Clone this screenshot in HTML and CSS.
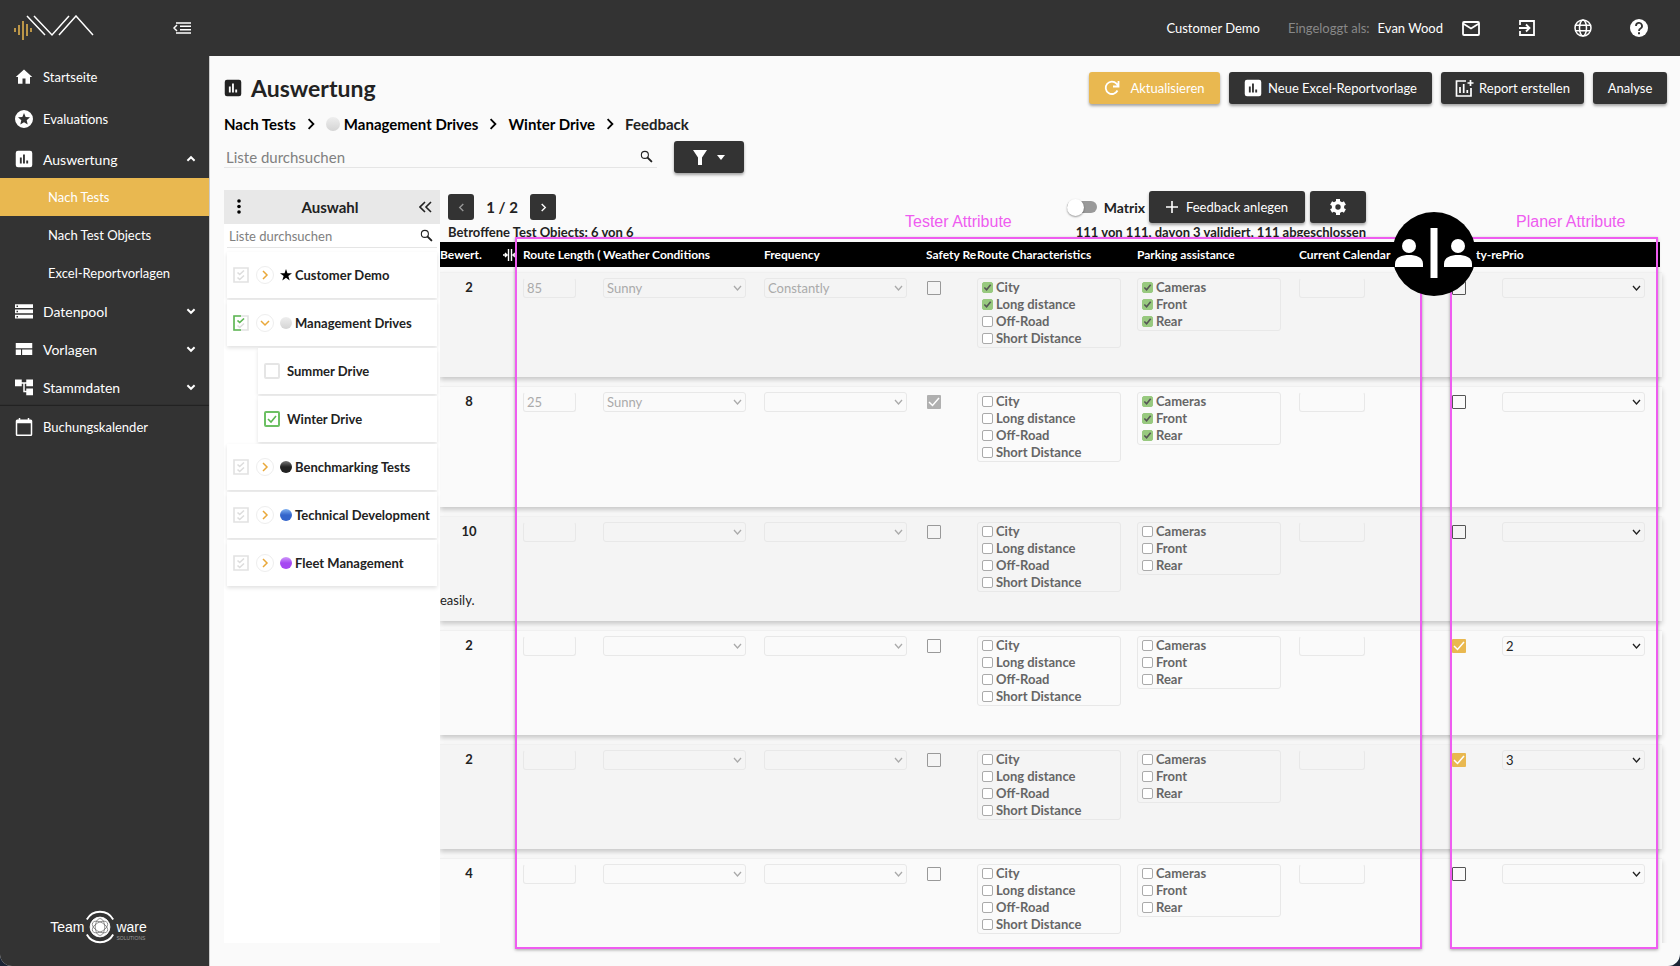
FILE: index.html
```html
<!DOCTYPE html>
<html lang="de">
<head>
<meta charset="utf-8">
<title>Auswertung</title>
<link rel="stylesheet" href="styles.css">
</head>
<body>
<svg class="sprite">
  <symbol id="i-chart" viewBox="0 0 24 24"><path fill-rule="evenodd" d="M20 1H4a3 3 0 0 0-3 3v16a3 3 0 0 0 3 3h16a3 3 0 0 0 3-3V4a3 3 0 0 0-3-3zM9 18H6.500v-8H9zm4.200 0h-2.500V6h2.500zm4.300 0H15v-4h2.500z"/></symbol>
  <symbol id="i-search" viewBox="0 0 24 24"><circle cx="9" cy="9" r="6.500" fill="none" stroke="currentColor" stroke-width="2"/><path d="M14 14l7 7" stroke="currentColor" stroke-width="3.600" stroke-linecap="round"/></symbol>
  <symbol id="i-down" viewBox="0 0 10 10"><path d="M2 3.500l3 3 3-3" fill="none" stroke="currentColor" stroke-width="1.600"/></symbol>
  <symbol id="i-right" viewBox="0 0 10 10"><path d="M3 1l4 4-4 4" fill="none" stroke="currentColor" stroke-width="1.500"/></symbol>
  <symbol id="i-multi" viewBox="0 0 16 16"><path d="M1 1h14v14H1z" fill="none" stroke="#e2e2e2" stroke-width="1.600"/><path d="M4.500 5.500l2.200 2 4.300-4M4.500 10.500l2.200 2 4.300-4" fill="none" stroke="#ddd" stroke-width="1.600"/></symbol>
</svg>
<div class="app">
  <aside class="sidebar">
    <div class="brand">
      <svg class="logo" viewBox="0 0 80 26" width="80" height="26" fill="none"><path d="M1 13v4M5 10v10M9 6v19M13 9v12M17 13v4" stroke="#e9b850" stroke-width="1.500"/><path d="M13 1l18 19M20 1l18 19L55 1M45 20L62 1l17 19" stroke="#fff" stroke-width="1.500"/></svg>
      <button class="icon-btn" aria-label="Menü einklappen"><svg width="18" height="12" viewBox="0 0 18 12" fill="none" stroke="#fff" stroke-width="1.500"><path d="M3 1h15M7 4.300h11M7 7.700h11M3 11h15M4 3L1 6l3 3"/></svg></button>
    </div>
    <nav class="nav">
      <a class="item tall" href="#"><svg viewBox="0 0 24 24"><path d="M10 21v-7h4v7h6v-9h3L12 2 1 12h3v9z"/></svg>Startseite</a>
      <a class="item tall" href="#"><svg viewBox="0 0 24 24"><path fill-rule="evenodd" d="M12 0a12 12 0 1 0 0 24 12 12 0 0 0 0-24zm0 4l2.200 5.300 5.800.5-4.400 3.800 1.300 5.600-4.900-3-4.900 3 1.300-5.600L4 9.800l5.800-.5z"/></svg>Evaluations</a>
      <a class="item" href="#"><svg viewBox="0 0 24 24"><use href="#i-chart"/></svg>Auswertung<svg class="caret up"><use href="#i-down"/></svg></a>
      <a class="item sub active" href="#">Nach Tests</a>
      <a class="item sub" href="#">Nach Test Objects</a>
      <a class="item sub" href="#">Excel-Reportvorlagen</a>
      <a class="item" href="#"><svg viewBox="0 0 24 24"><path fill-rule="evenodd" d="M0 3h24v5H0zM0 10h24v5H0zM0 17h24v5H0zM2 4.500v2h2v-2zM2 11.500v2h2v-2zM2 18.500v2h2v-2z"/></svg>Datenpool<svg class="caret"><use href="#i-down"/></svg></a>
      <a class="item" href="#"><svg viewBox="0 0 24 24"><path d="M1 4h22v7H1zM1 12.500h7V20H1zM9.500 12.500H23V20H9.500z"/></svg>Vorlagen<svg class="caret"><use href="#i-down"/></svg></a>
      <a class="item" href="#"><svg viewBox="0 0 24 24"><path d="M0 2h9v3.500h6V2h9v9h-9V7.500h-2V17h2v-3h9v9h-9v-4h-4V7.500H9V11H0z"/></svg>Stammdaten<svg class="caret"><use href="#i-down"/></svg></a>
      <a class="item tall ruled" href="#"><svg viewBox="0 0 24 24"><path fill-rule="evenodd" d="M5 0h2v2h10V0h2v2h2a2 2 0 0 1 2 2v18a2 2 0 0 1-2 2H3a2 2 0 0 1-2-2V4a2 2 0 0 1 2-2h2zM3 7v15h18V7z"/></svg>Buchungskalender</a>
    </nav>
    <div class="vendor">
      <span class="vendor-name">Team</span>
      <svg viewBox="0 0 34 36" width="32" height="34" fill="none" stroke="#fff"><path d="M3 10a16 16 0 0 1 28 0M3 26a16 16 0 0 0 28 0" stroke-width="2"/><circle cx="17" cy="18" r="10.500" fill="#fff"/><g stroke="#666" stroke-width=".7"><ellipse cx="17" cy="18" rx="9" ry="5" transform="rotate(30 17 18)"/><ellipse cx="17" cy="18" rx="9" ry="5" transform="rotate(90 17 18)"/><ellipse cx="17" cy="18" rx="9" ry="5" transform="rotate(150 17 18)"/></g></svg>
      <span class="vendor-name">ware<small>SOLUTIONS</small></span>
    </div>
  </aside>

  <div class="page">
    <header class="topbar">
      <span class="client">Customer Demo</span>
      <span class="login">Eingeloggt als:</span>
      <span class="user">Evan Wood</span>
      <div class="top-icons">
        <button class="icon-btn" aria-label="Nachrichten"><svg width="18" height="15" viewBox="0 0 18 15" fill="none" stroke="#fff" stroke-width="1.800"><rect x="1" y="1" width="16" height="13" rx="1"/><path d="M1 2.500l8 5 8-5"/></svg></button>
        <button class="icon-btn" aria-label="Abmelden"><svg width="18" height="18" viewBox="0 0 18 18" fill="none" stroke="#fff" stroke-width="1.800"><path d="M2 6V2h14v14H2v-4M1 9h10M8 5.500L11.500 9 8 12.500"/></svg></button>
        <button class="icon-btn" aria-label="Sprache"><svg width="18" height="18" viewBox="0 0 18 18" fill="none" stroke="#fff" stroke-width="1.500"><circle cx="9" cy="9" r="8"/><ellipse cx="9" cy="9" rx="3.500" ry="8"/><path d="M1.500 6.300h15M1.500 11.700h15"/></svg></button>
        <button class="icon-btn" aria-label="Hilfe"><svg width="18" height="18" viewBox="0 0 18 18"><circle cx="9" cy="9" r="9" fill="#fff"/><path d="M6 7a3 3 0 1 1 4.500 2.500Q9 10.300 9 12" fill="none" stroke="#333" stroke-width="1.800"/><path d="M8 13.200h2v2H8z" fill="#333"/></svg></button>
      </div>
    </header>

    <main class="content">
      <div class="title-row">
        <h1><svg width="18" height="18" fill="#222"><use href="#i-chart"/></svg>Auswertung</h1>
        <div class="actions">
          <button class="btn accent"><svg width="16" height="16" viewBox="0 0 16 16" fill="none" stroke="#fff" stroke-width="1.800"><path d="M13.500 10.500A6.200 6.200 0 1 1 12.500 3.600L14 5.500M14.500 1v5.500H9"/></svg>Aktualisieren</button>
          <button class="btn excel"><svg width="18" height="18" fill="#fff"><use href="#i-chart"/></svg>Neue Excel-Reportvorlage</button>
          <button class="btn report"><svg width="19" height="18" viewBox="0 0 19 18" fill="none" stroke="#fff" stroke-width="1.700"><path d="M11 2H1.500v15H16V9M5 8v6M8.700 5v9M12.300 11v3M15.500 1v6M12.500 4h6"/></svg>Report erstellen</button>
          <button class="btn plain">Analyse</button>
        </div>
      </div>
      <nav class="crumbs">
        <a href="#">Nach Tests</a><svg><use href="#i-right"/></svg>
        <a href="#"><i class="ball white"></i>Management Drives</a><svg><use href="#i-right"/></svg>
        <a href="#">Winter Drive</a><svg><use href="#i-right"/></svg>
        <span>Feedback</span>
      </nav>
      <div class="filter-row">
        <label class="search"><input type="text" placeholder="Liste durchsuchen" aria-label="Liste durchsuchen"><svg width="13" height="13"><use href="#i-search"/></svg></label>
        <button class="btn filter" aria-label="Filter"><svg width="14" height="15" viewBox="0 0 14 15" fill="#fff"><path d="M0 0h14L9 7.500V15H5V7.500z"/></svg><svg width="8" height="5" viewBox="0 0 8 5" fill="#fff"><path d="M0 0h8L4 5z"/></svg></button>
      </div>

      <div class="workspace">
        <section class="tree">
          <div class="tree-head">
            <button class="icon-btn" aria-label="Optionen"><svg width="4" height="16" viewBox="0 0 4 16"><circle cx="2" cy="2" r="1.800"/><circle cx="2" cy="7.500" r="1.800"/><circle cx="2" cy="13" r="1.800"/></svg></button>
            <h2>Auswahl</h2>
            <button class="icon-btn" aria-label="Einklappen"><svg width="13" height="12" viewBox="0 0 13 12" fill="none" stroke="#222" stroke-width="1.600"><path d="M6 1L1 6l5 5M12 1L7 6l5 5"/></svg></button>
          </div>
          <label class="search small"><input type="text" placeholder="Liste durchsuchen" aria-label="Auswahl durchsuchen"><svg width="13" height="13"><use href="#i-search"/></svg></label>
          <ul class="cards">
            <li class="card"><svg class="multi"><use href="#i-multi"/></svg><button class="expand" aria-label="Öffnen"><svg><use href="#i-right"/></svg></button><i class="star"><svg width="12" height="12" viewBox="0 0 24 24"><path d="M12 0l2.900 8.600H24l-7.300 5.500L19.400 23 12 17.600 4.600 23l2.700-8.900L0 8.600h9.100z"/></svg></i>Customer Demo</li>
            <li class="card"><svg class="multi" viewBox="0 0 16 16" fill="none" stroke-width="1.600"><use href="#i-multi"/><path d="M8 1H1v14h7M4.500 5.500l2.200 2 4.300-4" stroke="#5cb852"/></svg><button class="expand open" aria-label="Schließen"><svg><use href="#i-right"/></svg></button><i class="ball white"></i>Management Drives</li>
            <li class="card child"><label><input class="tick" type="checkbox">Summer Drive</label></li>
            <li class="card child"><label><input class="tick" type="checkbox" checked>Winter Drive</label></li>
            <li class="card"><svg class="multi"><use href="#i-multi"/></svg><button class="expand" aria-label="Öffnen"><svg><use href="#i-right"/></svg></button><i class="ball black"></i>Benchmarking Tests</li>
            <li class="card"><svg class="multi"><use href="#i-multi"/></svg><button class="expand" aria-label="Öffnen"><svg><use href="#i-right"/></svg></button><i class="ball blue"></i>Technical Development</li>
            <li class="card"><svg class="multi"><use href="#i-multi"/></svg><button class="expand" aria-label="Öffnen"><svg><use href="#i-right"/></svg></button><i class="ball purple"></i>Fleet Management</li>
          </ul>
        </section>

        <section class="results">
          <div class="toolbar">
            <button class="btn page-btn prev" aria-label="Zurück"><svg><use href="#i-right"/></svg></button>
            <span class="page-no">1 / 2</span>
            <button class="btn page-btn" aria-label="Weiter"><svg><use href="#i-right"/></svg></button>
            <label class="matrix"><input class="switch" type="checkbox">Matrix</label>
            <button class="btn add"><svg width="12" height="12" viewBox="0 0 12 12" stroke="#fff" stroke-width="1.600"><path d="M6 0v12M0 6h12"/></svg>Feedback anlegen</button>
            <button class="btn gear" aria-label="Einstellungen"><svg width="18" height="18" viewBox="0 0 18 18"><g stroke="#fff" stroke-width="4"><path d="M9 1v16M2.100 5l13.800 8M15.900 5L2.100 13"/></g><circle cx="9" cy="9" r="6.200" fill="#fff"/><circle cx="9" cy="9" r="2.700" fill="#333"/></svg></button>
          </div>
          <div class="counts"><span>Betroffene Test Objects: 6 von 6</span><span>111 von 111, davon 3 validiert, 111 abgeschlossen</span></div>
          <div class="table-area">
            <div class="table-clip">
              <table class="grid">
                <thead><tr><th>Bewert.</th><th class="resize"><svg width="14" height="12" viewBox="0 0 14 12" stroke="#fff" stroke-width="1.400" fill="none"><path d="M5.500 0v12M8.500 0v12M0 6h4M2 4l2 2-2 2M14 6h-4M12 4l-2 2 2 2"/></svg></th><th>Route Length (</th><th>Weather Conditions</th><th>Frequency</th><th>Safety Re</th><th>Route Characteristics</th><th>Parking assistance</th><th>Current Calendar</th><th class="end">ty-re</th><th>Prio</th></tr></thead>
                <tbody id="rows"></tbody>
              </table>
            </div>
            <div class="frame tester"><span>Tester Attribute</span></div>
            <div class="frame planer"><span>Planer Attribute</span></div>
            <svg class="split" width="84" height="84" viewBox="0 0 84 84" fill="#fff"><circle cx="42" cy="42" r="42" fill="#000"/><path d="M38.500 16h7v50h-7z"/><circle cx="17" cy="34" r="7"/><path d="M3 55v-3c0-7 7-9 14-9s14 2 14 9v3z"/><circle cx="66" cy="34" r="7"/><path d="M52 55v-3c0-7 7-9 14-9s14 2 14 9v3z"/></svg>
          </div>
        </section>
      </div>
    </main>
  </div>
</div>
<script src="rows.js"></script>
</body>
</html>
```
FILE: rows.js
```js
const feedback = [
  { score: 2, length: '85', weather: 'Sunny', frequency: 'Constantly', route: ['City', 'Long distance'], parking: ['Cameras', 'Front', 'Rear'] },
  { score: 8, length: '25', weather: 'Sunny', safety: true, parking: ['Cameras', 'Front', 'Rear'], tall: true },
  { score: 10, note: 'easily.' },
  { score: 2, planer: true, prio: '2' },
  { score: 2, planer: true, prio: '3' },
  { score: 4 }
];
const routeOptions = ['City', 'Long distance', 'Off-Road', 'Short Distance'];
const parkingOptions = ['Cameras', 'Front', 'Rear'];

const text = (value, label, cls = '') =>
  `<input class="field ${cls}" type="text" value="${value || ''}" aria-label="${label}" disabled>`;
const select = (value, label, off = true) =>
  `<select class="field drop" aria-label="${label}" ${off ? 'disabled' : ''}><option>${value || ''}</option></select>`;
const box = (on, label, off = true) =>
  `<input class="box" type="checkbox" aria-label="${label}" ${on ? 'checked' : ''} ${off ? 'disabled' : ''}>`;
const group = (options, chosen = [], label) =>
  `<fieldset class="group" aria-label="${label}" disabled>${options.map(o =>
    `<label><input type="checkbox" ${chosen.includes(o) ? 'checked' : ''}>${o}</label>`).join('')}</fieldset>`;

document.getElementById('rows').innerHTML = feedback.map(r => `
  <tr class="${r.tall ? 'tall' : ''}">
    <td class="score">${r.score}${r.note ? `<p>${r.note}</p>` : ''}</td><td></td>
    <td>${text(r.length, 'Route Length')}</td>
    <td>${select(r.weather, 'Weather Conditions')}</td>
    <td>${select(r.frequency, 'Frequency')}</td>
    <td>${box(r.safety, 'Safety')}</td>
    <td>${group(routeOptions, r.route, 'Route Characteristics')}</td>
    <td>${group(parkingOptions, r.parking, 'Parking assistance')}</td>
    <td>${text('', 'Current Calendar Week', 'week')}</td>
    <td>${box(r.planer, 'Priority', false)}</td>
    <td>${select(r.prio, 'Prio', false)}</td>
  </tr>`).join('');
```
FILE: styles.css
```css
* { box-sizing: border-box; }
body { margin: 0; background: #1b2435; font-family: Lato, "Noto Sans", sans-serif; font-size: 13px; color: #222; }
button, input, select { font: inherit; color: inherit; }
a { color: inherit; text-decoration: none; }
svg { flex: none; }
.sprite { display: none; }

.app { display: flex; height: 100vh; background: #fafafa; border-radius: 0 0 12px 12px; overflow: hidden; }
.icon-btn { display: flex; padding: 0; border: 0; background: none; }

.sidebar { display: flex; flex-direction: column; width: 209px; flex: none; background: #333; color: #fff; }
.brand { display: flex; align-items: center; justify-content: space-between; height: 56px; padding: 0 18px 0 14px; }
.nav { display: flex; flex-direction: column; }
.item { display: flex; align-items: center; height: 38px; padding: 0 12px 0 15px; gap: 10px; font-size: 14px; }
.item > svg { width: 18px; height: 18px; fill: #fff; }
.item.tall { height: 42px; font-size: 13px; }
.item > .caret { width: 12px; height: 12px; margin-left: auto; }
.caret.up { transform: rotate(180deg); }
.item.sub { padding-left: 48px; font-size: 13px; }
.item.active { background: #e9b850; }
.ruled { box-shadow: 0 -1px 1px #222; }
.vendor { display: flex; align-items: center; justify-content: center; margin: auto 12px 22px 0; }
.vendor-name { font: 14px/16px "Liberation Sans Narrow", "Liberation Sans", sans-serif; }
.vendor-name small { display: block; height: 0; font-size: 5px; line-height: 6px; color: #999; }

.page { display: flex; flex-direction: column; flex: 1; min-width: 0; border-left: 1px solid #ccc; }
.topbar { display: flex; align-items: center; justify-content: flex-end; height: 56px; flex: none; padding-right: 32px; margin-left: -1px; background: #333; color: #fff; font-size: 13px; }
.login { margin: 0 8px 0 28px; color: #888; }
.top-icons { display: flex; align-items: center; gap: 38px; margin-left: 19px; }

.content { display: flex; flex-direction: column; flex: 1; min-height: 0; padding: 15px 13px 23px 14px; }
.title-row { display: flex; justify-content: space-between; align-items: center; height: 34px; }
h1 { display: flex; align-items: center; gap: 9px; margin: 0; font-size: 23px; line-height: 32px; }
.actions { display: flex; gap: 9px; }
.btn { display: flex; align-items: center; justify-content: center; height: 32px; padding: 0; border: 0; border-radius: 3px; background: #333; color: #fff; box-shadow: 0 2px 3px rgba(0, 0, 0, .35); }
.accent { width: 131px; gap: 10px; background: #e9b850; }
.excel { width: 203px; gap: 6px; }
.report { width: 143px; gap: 5px; }
.plain { width: 74px; }
.crumbs { display: flex; align-items: center; gap: 9px; height: 20px; margin-top: 9px; font-size: 15px; font-weight: 700; color: #000; }
.crumbs a { display: flex; align-items: center; gap: 4px; }
.crumbs svg { width: 12px; height: 12px; }
.crumbs span { color: #222; }
.ball { width: 12px; height: 12px; flex: none; border-radius: 50%; }
.crumbs .ball { width: 14px; height: 14px; }
.white { background: linear-gradient(#eee, #d4d4d4); }
.black { background: linear-gradient(#777, #222 50%); }
.blue { background: linear-gradient(#7fb0f0, #3465cb 50%); }
.purple { background: linear-gradient(#cf98fa, #a548f2 50%); }
.filter-row { display: flex; align-items: center; gap: 17px; height: 32px; margin-top: 7px; }
.search { display: flex; align-items: center; width: 433px; height: 22px; padding: 0 4px 0 2px; border-bottom: 1px solid #e5e5e5; }
.search input { flex: 1; min-width: 0; padding: 0; border: 0; background: none; font-size: 15px; }
.search input::placeholder { color: #808080; }
.filter { width: 70px; gap: 10px; }

.workspace { display: flex; flex: 1; min-height: 0; margin-top: 17px; }
.tree { width: 216px; flex: none; background: #fff; }
.tree-head { display: flex; align-items: center; justify-content: space-between; height: 34px; padding: 0 8px 0 13px; background: #e8e8e8; }
h2 { margin: 0; font-size: 15px; }
.search.small { width: auto; height: 24px; margin: 0 3px; }
.search.small input { font-size: 13px; }
.cards { display: flex; flex-direction: column; gap: 2px; margin: 4px 3px 0; padding: 0; list-style: none; }
.card { display: flex; align-items: center; height: 46px; padding-left: 6px; background: #fff; box-shadow: 0 2px 4px rgba(0, 0, 0, .12); font-weight: 700; white-space: nowrap; }
.card.child { margin-left: 31px; }
.card label { display: flex; align-items: center; gap: 7px; }
.multi, .tick { width: 16px; height: 16px; margin: 0; }
.tick { appearance: none; border: 2px solid #e5e5e5; border-radius: 2px; }
.tick:checked { border-color: #6cc063; background: url("data:image/svg+xml,%3Csvg xmlns='http://www.w3.org/2000/svg' viewBox='0 0 12 12'%3E%3Cpath d='M2 6l3 3 5-6' fill='none' stroke='%235cb852' stroke-width='1.600'/%3E%3C/svg%3E"); }
.expand { display: flex; align-items: center; justify-content: center; width: 18px; height: 18px; margin: 0 6px 0 7px; padding: 0; border: 1px solid #eee; border-radius: 50%; background: #fff; color: #e9a83a; }
.expand svg { width: 10px; height: 10px; }
.open svg { transform: rotate(90deg); }
.card .ball, .star { margin-right: 3px; }
.star { display: flex; }

.results { display: flex; flex-direction: column; flex: 1; min-width: 0; }
.toolbar { display: flex; align-items: center; max-width: 926px; height: 34px; padding-left: 8px; }
.page-btn { width: 26px; height: 26px; box-shadow: none; }
.page-btn svg { width: 9px; height: 9px; }
.prev { color: #999; }
.prev svg { transform: rotate(180deg); }
.page-no { width: 56px; text-align: center; font-size: 15px; font-weight: 700; }
.matrix { display: flex; align-items: center; gap: 7px; margin: 0 4px 0 auto; font-size: 14px; font-weight: 700; }
.switch { appearance: none; display: flex; align-items: center; width: 30px; height: 12px; margin: 0; border-radius: 6px; background: #999; }
.switch::before { content: ""; width: 17px; height: 17px; border-radius: 50%; background: #fff; box-shadow: 0 1px 2px rgba(0, 0, 0, .4); }
.add { width: 156px; gap: 8px; margin-right: 5px; }
.gear { width: 56px; }
.counts { display: flex; justify-content: space-between; max-width: 926px; height: 18px; padding-left: 8px; line-height: 16px; font-weight: 700; }

.table-area { position: relative; flex: 1; min-height: 0; }
.table-clip { height: 100%; padding-right: 5px; overflow: hidden; }
.grid, .grid thead, .grid tbody { display: block; }
.grid tr { display: grid; grid-template-columns: 60px 23px 80px 161px 162px 51px 160px 162px 152px 51px 1fr; }
.grid thead tr { height: 25px; margin-right: 2px; background: #000; color: #fff; }
th { overflow: hidden; padding: 0; font-size: 12px; line-height: 25px; text-align: left; white-space: nowrap; }
.resize { display: flex; align-items: center; justify-content: flex-start; }
.resize svg { margin-left: 3px; }
.end { text-align: right; }
.grid tbody { margin-top: 5px; }
.grid tbody tr { height: 105px; margin-bottom: 9px; border-top: 1px solid #f0f0f0; box-shadow: 0 3px 5px rgba(0, 0, 0, .2); }
.grid tbody tr:nth-child(odd) { background: #f4f4f4; }
.grid tbody tr.tall { height: 121px; }
td { padding: 5px 0 0; }
td.score { padding: 6px 2px 0 0; line-height: 16px; font-weight: 700; text-align: center; }
.score p { margin: 53px 0 0; font-weight: 400; text-align: left; }
.field { display: block; width: 53px; height: 20px; margin: 0; padding: 0 3px; border: 1px solid #e8e8e8; border-top-color: transparent; border-radius: 3px; background: none; }
.field:disabled { color: #aaa; opacity: 1; }
.week { width: 66px; }
.drop { appearance: none; width: 143px; border-color: #e8e8e8; background: url("data:image/svg+xml,%3Csvg xmlns='http://www.w3.org/2000/svg' width='9' height='6'%3E%3Cpath d='M1 1l3.500 4L8 1' fill='none' stroke='%23222' stroke-width='1.300'/%3E%3C/svg%3E") no-repeat right 3px center; }
.drop:disabled { background-image: url("data:image/svg+xml,%3Csvg xmlns='http://www.w3.org/2000/svg' width='9' height='6'%3E%3Cpath d='M1 1l3.500 4L8 1' fill='none' stroke='%23aaa' stroke-width='1.300'/%3E%3C/svg%3E"); }
.box { appearance: none; display: block; width: 14px; height: 14px; margin: 3px 0 0 1px; border: 1px solid #555; border-radius: 1px; background: transparent; }
.box:disabled { border-color: #999; }
.box:checked { border: 0; background: #e9b850 url("data:image/svg+xml,%3Csvg xmlns='http://www.w3.org/2000/svg' viewBox='0 0 14 14'%3E%3Cpath d='M2 7l3.500 3.500L12 3' fill='none' stroke='white' stroke-width='1.500'/%3E%3C/svg%3E"); }
.box:checked:disabled { background-color: #b0b0b0; }
.group { display: flex; flex-direction: column; width: 144px; min-width: 0; margin: 0; padding: 0 0 0 4px; border: 1px solid #e8e8e8; border-radius: 3px; }
.group label { display: flex; align-items: center; gap: 3px; height: 17px; line-height: 17px; font-weight: 700; color: #666; }
.group input { appearance: none; width: 11px; height: 11px; margin: 0; border: 1px solid #aaa; border-radius: 2px; background: #fff; }
.group input:checked { border-color: #98c97f; background: #98c97f url("data:image/svg+xml,%3Csvg xmlns='http://www.w3.org/2000/svg' viewBox='0 0 10 10'%3E%3Cpath d='M1.500 5l2.500 2.500L8.500 2' fill='none' stroke='%23555' stroke-width='1.800'/%3E%3C/svg%3E"); }

.frame { position: absolute; top: -5px; bottom: -6px; border: 2px solid #ef5cf0; box-shadow: 0 1px 3px rgba(0, 0, 0, .35); pointer-events: none; }
.frame span { position: absolute; bottom: 100%; margin-bottom: 8px; font: 16px/18px "Liberation Sans", Arial, sans-serif; color: #ef5cf0; white-space: nowrap; }
.tester { left: 75px; width: 907px; }
.tester span { left: 388px; }
.planer { left: 1010px; width: 208px; }
.planer span { left: 64px; }
.split { position: absolute; left: 952px; top: -30px; }
```
